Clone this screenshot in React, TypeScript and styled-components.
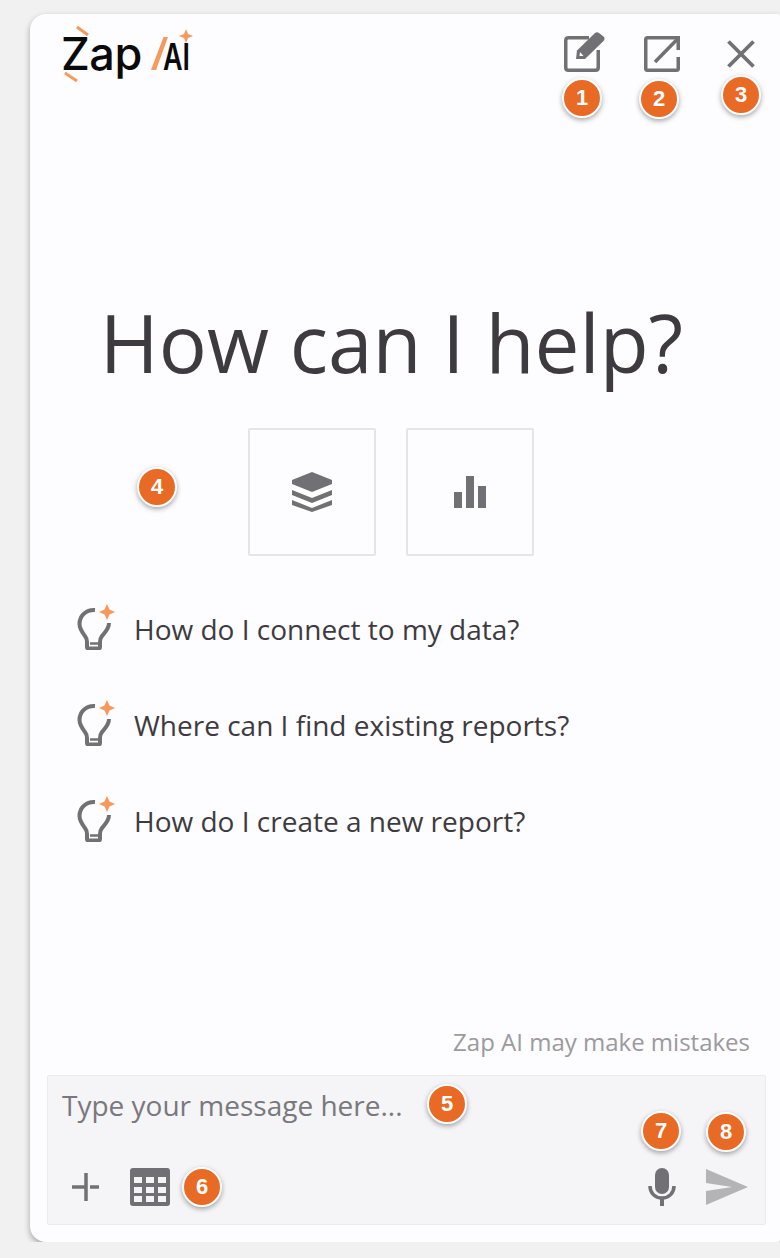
import { FC } from 'react';
import styled, { createGlobalStyle } from 'styled-components';

const GREY = '#717074';
const ORANGE = '#f59a5c';

const suggestions = [
	'How do I connect to my data?',
	'Where can I find existing reports?',
	'How do I create a new report?',
];

const badges = [
	{ n: 1, x: 582, y: 98 },
	{ n: 2, x: 659, y: 99 },
	{ n: 3, x: 741, y: 95 },
	{ n: 4, x: 157, y: 487 },
	{ n: 5, x: 447, y: 1104 },
	{ n: 6, x: 202, y: 1187 },
	{ n: 7, x: 661, y: 1131 },
	{ n: 8, x: 726, y: 1132 },
];

const Logo: FC = () => (
	<svg width="140" height="60" viewBox="0 0 140 60">
		<path d="M16 2l11 8M4 48l12 8" stroke={ORANGE} strokeWidth="3" fill="none" />
		<text x="0" y="45" fontFamily="Inter, sans-serif" fontSize="45" fontWeight="500" fill="#0a0a0a" letterSpacing="-.5">
			Zap
		</text>
		<path d="M90 45l12.500-33H107L95 45z" fill={ORANGE} />
		<text
			x="102"
			y="45"
			fontFamily="Inter, sans-serif"
			fontSize="37"
			fontWeight="600"
			fill="#0a0a0a"
			textLength="27"
			lengthAdjust="spacingAndGlyphs"
		>
			AI
		</text>
		<path d="M125 4l2 5 5 2-5 2-2 5-2-5-5-2 5-2z" fill={ORANGE} />
	</svg>
);

const EditIcon: FC = () => (
	<svg width="42" height="42" viewBox="0 0 42 42">
		<path
			d="M25 5.750H4.500Q1.750 5.750 1.750 8.500V35.500Q1.750 38.250 4.500 38.250H31.500Q34.250 38.250 34.250 35.500V18"
			fill="none"
			stroke={GREY}
			strokeWidth="3.500"
		/>
		<path d="M12 27l1-8.500L31 1Q33 -.5 35 1L39.500 4.500Q41.500 6.500 39.500 9L21 27z" fill={GREY} />
		<path d="M15.500 24l.5-4 3.500 4z" fill="#fdfcfe" />
	</svg>
);

const OpenIcon: FC = () => (
	<svg width="38" height="38" viewBox="0 0 38 38">
		<path
			d="M34.250 14V1.750H3.500Q1.750 1.750 1.750 3.500V32.500Q1.750 34.250 3.500 34.250H32.500Q34.250 34.250 34.250 32.500V21"
			fill="none"
			stroke={GREY}
			strokeWidth="3.500"
		/>
		<path d="M11 26L33 3.500" stroke={GREY} strokeWidth="3.500" fill="none" />
	</svg>
);

const CloseIcon: FC = () => (
	<svg width="30" height="30" viewBox="0 0 30 30">
		<path d="M2.500 2.500l25 25M27.500 2.500l-25 25" stroke={GREY} strokeWidth="3.800" fill="none" />
	</svg>
);

const LayersIcon: FC = () => (
	<svg width="42" height="42" viewBox="0 0 42 42">
		<path d="M21 1L41 9v4L21 21 1 13V9z" fill={GREY} />
		<path d="M1 19l20 8 20-8v5L21 32 1 24z" fill={GREY} />
		<path d="M1 29l20 8 20-8v5L21 41 1 34z" fill={GREY} />
	</svg>
);

const BarsIcon: FC = () => (
	<svg width="32" height="32" viewBox="0 0 32 32">
		<path d="M0 16h8v16H0zM12 0h8v32h-8zM24 10h8v22h-8z" fill={GREY} />
	</svg>
);

const BulbIcon: FC = () => (
	<svg width="40" height="46" viewBox="0 0 40 46">
		<path
			d="M19 6C10 5.500 3.500 12 3.500 20c0 5 3 8.500 5.500 12 1.500 2 2 4 2 6v5q0 1.500 1.500 1.500h10q1.500 0 1.500-1.500v-5c0-2 .5-4 2-6 3-4 7-7 7-13"
			fill="none"
			stroke={GREY}
			strokeWidth="4"
		/>
		<path d="M14 39.500h8" stroke={GREY} strokeWidth="2.500" fill="none" />
		<path d="M31 0l2.500 5.500L39 8l-5.500 2.500L31 16l-2.500-5.500L23 8l5.500-2.500z" fill={ORANGE} />
	</svg>
);

const PlusIcon: FC = () => (
	<svg width="30" height="30" viewBox="0 0 30 30">
		<path d="M1 15h14M19 15h9M15 1v28" stroke={GREY} strokeWidth="3.500" fill="none" />
	</svg>
);

const GridIcon: FC = () => (
	<svg width="40" height="38" viewBox="0 0 40 38">
		<rect width="40" height="38" rx="3" fill={GREY} />
		<path
			d="M4 9h8v6H4zM16 9h8v6h-8zM28 9h8v6h-8zM4 19h8v6H4zM16 19h8v6h-8zM28 19h8v6h-8zM4 28h8v6H4zM16 28h8v6h-8zM28 28h8v6h-8z"
			fill="#f5f4f7"
		/>
	</svg>
);

const MicIcon: FC = () => (
	<svg width="28" height="38" viewBox="0 0 28 38">
		<rect x="7" y="0" width="14" height="26" rx="7" fill={GREY} />
		<path d="M2 18c0 7 5 12 12 12s12-5 12-12" fill="none" stroke={GREY} strokeWidth="3.500" />
		<path d="M14 30v8" stroke={GREY} strokeWidth="4" fill="none" />
	</svg>
);

const SendIcon: FC = () => (
	<svg width="42" height="36" viewBox="0 0 42 36">
		<path d="M0 0l42 18L0 36V22l26-4L0 14z" fill="#b4b4b6" />
	</svg>
);

const App: FC = () => (
	<>
		<GlobalStyle />
		<Card>
			<Header>
				<Logo />
				<HeaderActions>
					<EditIcon />
					<OpenIcon />
					<CloseIcon />
				</HeaderActions>
			</Header>
			<Title>How can I help?</Title>
			<Tiles>
				<Tile>
					<LayersIcon />
				</Tile>
				<Tile>
					<BarsIcon />
				</Tile>
			</Tiles>
			<Suggestions>
				{suggestions.map((text) => (
					<Suggestion key={text}>
						<BulbIcon />
						<SuggestionText>{text}</SuggestionText>
					</Suggestion>
				))}
			</Suggestions>
			<Disclaimer>Zap AI may make mistakes</Disclaimer>
			<Composer>
				<Placeholder>Type your message here...</Placeholder>
				<ComposerTools>
					<LeftTools>
						<PlusIcon />
						<GridIcon />
					</LeftTools>
					<RightTools>
						<MicIcon />
						<SendIcon />
					</RightTools>
				</ComposerTools>
			</Composer>
			{badges.map((b) => (
				<Badge key={b.n} $x={b.x} $y={b.y}>
					{b.n}
				</Badge>
			))}
		</Card>
	</>
);

const GlobalStyle = createGlobalStyle`
	html, body {
		margin: 0;
		padding: 0;
		background: #f1f1f2;
		overflow: hidden;
	}
`;

const Card = styled.div`
	position: relative;
	box-sizing: border-box;
	display: flex;
	flex-direction: column;
	width: 750px;
	height: 1228px;
	margin: 14px 0 0 30px;
	background: #fdfcfe;
	border-radius: 16px 2px 2px 16px;
	box-shadow: 0 3px 6px rgba(0, 0, 0, 0.32);
	font-family: 'Open Sans', sans-serif;
`;

const Header = styled.div`
	display: flex;
	justify-content: space-between;
	align-items: flex-start;
	height: 120px;
	padding: 11px 24px 0 31px;
	box-sizing: border-box;
`;

const HeaderActions = styled.div`
	display: flex;
	align-items: flex-start;
	gap: 38px;
	padding-top: 7px;

	svg:nth-child(2) {
		margin-top: 4px;
	}

	svg:nth-child(3) {
		margin: 7px 0 0 6px;
	}
`;

const Title = styled.h1`
	margin: 158px 27px 0 0;
	font-size: 80px;
	line-height: 100px;
	font-weight: 400;
	text-align: center;
	color: #3d3b40;
`;

const Tiles = styled.div`
	display: flex;
	justify-content: center;
	gap: 30px;
	margin: 36px 29px 0 0;
`;

const Tile = styled.div`
	display: flex;
	align-items: center;
	justify-content: center;
	box-sizing: border-box;
	width: 128px;
	height: 128px;
	border: 2px solid #e5e4e8;
	border-radius: 2px;
`;

const Suggestions = styled.div`
	display: flex;
	flex-direction: column;
	gap: 50px;
	margin: 48px 0 0 46px;
`;

const Suggestion = styled.div`
	display: flex;
	align-items: flex-start;
	gap: 18px;
	height: 46px;
`;

const SuggestionText = styled.span`
	font-size: 28px;
	line-height: 50px;
	color: #3d3b40;
`;

const Disclaimer = styled.div`
	margin: auto 30px 1px 0;
	font-size: 24px;
	line-height: 34px;
	text-align: right;
	color: #9b9a9d;
`;

const Composer = styled.div`
	display: flex;
	flex-direction: column;
	justify-content: space-between;
	box-sizing: border-box;
	width: 719px;
	height: 150px;
	margin: 15px 0 17px 17px;
	padding: 10px 17px 18px 14px;
	background: #f5f4f7;
	border: 1px solid #ebeaed;
	border-radius: 2px;
`;

const Placeholder = styled.div`
	font-size: 28px;
	line-height: 38px;
	color: #79787c;
`;

const ComposerTools = styled.div`
	display: flex;
	justify-content: space-between;
	align-items: center;
`;

const LeftTools = styled.div`
	display: flex;
	align-items: center;
	gap: 29px;
	padding-left: 9px;
`;

const RightTools = styled.div`
	display: flex;
	align-items: center;
	gap: 30px;
`;

const Badge = styled.div<{ $x: number; $y: number }>`
	position: absolute;
	left: ${(props) => props.$x - 50}px;
	top: ${(props) => props.$y - 34}px;
	box-sizing: border-box;
	display: flex;
	align-items: center;
	justify-content: center;
	width: 40px;
	height: 40px;
	border: 2px solid #fff;
	border-radius: 50%;
	background: #e96a24;
	box-shadow: 0 2px 5px rgba(0, 0, 0, 0.35);
	color: #fff;
	font-family: 'Liberation Sans', Arial, sans-serif;
	font-size: 22px;
	font-weight: 700;
`;

export default App;
